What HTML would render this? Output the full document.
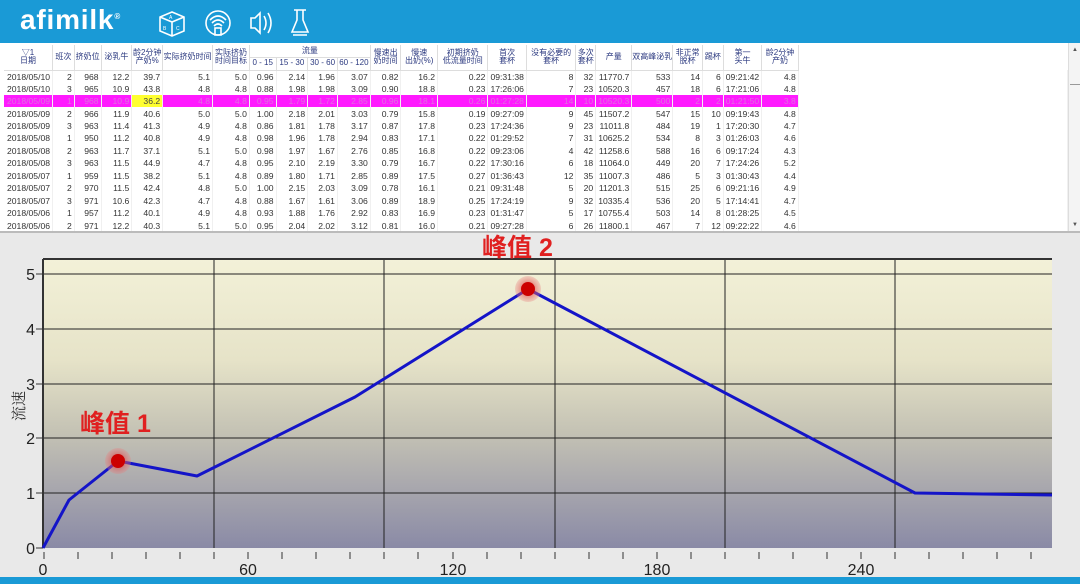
<!DOCTYPE html>
<html><head><meta charset="utf-8">
<style>
*{margin:0;padding:0;box-sizing:border-box}
body{width:1080px;height:584px;overflow:hidden;background:#fff;font-family:"Liberation Sans","Noto Sans CJK SC",sans-serif;position:relative}
#hdr{position:absolute;left:0;top:0;width:1080px;height:43px;background:#1a9ad6}
#logo{position:absolute;left:20px;top:4px;color:#fff;font-weight:bold;font-size:28px;letter-spacing:0.8px}
#logo sup{font-size:8px;vertical-align:top;position:relative;top:8px}
#tbl{position:absolute;left:4px;top:45px;width:1064px;height:186px;overflow:hidden}
table{border-collapse:collapse;table-layout:fixed;font-size:8.6px;color:#333}
td{height:12.45px;line-height:12px;text-align:right;padding:0 2px;white-space:nowrap;overflow:hidden;border-right:1px solid #f0f0f0}
td:first-child{text-align:left;padding-left:3px}
th{font-weight:normal;color:#2c3a80;font-size:8px;line-height:8.5px;border-right:1px solid #ddd;border-bottom:1px solid #ddd;background:#fff;white-space:nowrap;overflow:hidden}
tr.h td{background:#ff1aff;color:#e070e0}
td.y{background:#ffff30 !important;color:#444 !important}
#sb{position:absolute;left:1068px;top:43px;width:12px;height:188px;background:#f4f4f4;border-left:1px solid #ddd}
#panel{position:absolute;left:0;top:231px;width:1080px;height:346px;background:#e9e9e9;border-top:2px solid #bbb}
#foot{position:absolute;left:0;top:577px;width:1080px;height:7px;background:#1a9ad6}
</style></head><body>
<div id="hdr">
<div id="logo">afimilk<sup>®</sup></div>
<svg width="1080" height="43" style="position:absolute;left:0;top:0" fill="none" stroke="#fff" stroke-width="1.6">
<path d="M172 12 L184 17 L184 31 L172 36 L160 31 L160 17 Z M160 17 L172 22 L184 17 M172 22 L172 36"/>
<text x="169" y="19" font-size="5" fill="#fff" stroke="none">A</text>
<text x="163" y="30" font-size="5" fill="#fff" stroke="none">B</text>
<text x="176" y="30" font-size="5" fill="#fff" stroke="none">C</text>
<circle cx="218" cy="23" r="12"/>
<path d="M210 20 Q218 12 226 20 M212 23 Q218 17 224 23 M214 26 Q218 22 222 26"/>
<rect x="215" y="28" width="6" height="7"/>
<path d="M251 18 h4 l5 -5 v20 l-5 -5 h-4 Z M264 16 q4 7 0 14 M268 13 q6 10 0 20"/>
<path d="M294 10 h12 M297 10 v10 l-5 12 h16 l-5 -12 v-10 M293 35 h14"/>
</svg>
</div>
<div id="tbl">
<table>
<colgroup><col style="width:44px"><col style="width:22px"><col style="width:27px"><col style="width:31px"><col style="width:31px"><col style="width:50px"><col style="width:37px"><col style="width:27px"><col style="width:32px"><col style="width:30px"><col style="width:33px"><col style="width:31px"><col style="width:37px"><col style="width:51px"><col style="width:34px"><col style="width:50px"><col style="width:20px"><col style="width:31px"><col style="width:40px"><col style="width:30px"><col style="width:21px"><col style="width:33px"><col style="width:37px"><col style="width:285px"></colgroup>
<tr style="height:12px"><th rowspan="2">▽1<br>日期</th><th rowspan="2">班次</th><th rowspan="2">挤奶位</th><th rowspan="2">泌乳牛</th><th rowspan="2">龄2分钟<br>产奶%</th><th rowspan="2">实际挤奶时间</th><th rowspan="2">实际挤奶<br>时间目标</th><th colspan="4">流量</th><th rowspan="2">慢速出<br>奶时间</th><th rowspan="2">慢速<br>出奶(%)</th><th rowspan="2">初期挤奶<br>低流量时间</th><th rowspan="2">首次<br>套杯</th><th rowspan="2">没有必要的<br>套杯</th><th rowspan="2">多次<br>套杯</th><th rowspan="2">产量</th><th rowspan="2">双高峰泌乳</th><th rowspan="2">非正常<br>脱杯</th><th rowspan="2">踢杯</th><th rowspan="2">第一<br>头牛</th><th rowspan="2">龄2分钟<br>产奶</th><th rowspan="2" style="border:none"></th></tr>
<tr style="height:13px"><th>0 - 15</th><th>15 - 30</th><th>30 - 60</th><th>60 - 120</th></tr>
<tr><td>2018/05/10</td><td>2</td><td>968</td><td>12.2</td><td>39.7</td><td>5.1</td><td>5.0</td><td>0.96</td><td>2.14</td><td>1.96</td><td>3.07</td><td>0.82</td><td>16.2</td><td>0.22</td><td>09:31:38</td><td>8</td><td>32</td><td>11770.7</td><td>533</td><td>14</td><td>6</td><td>09:21:42</td><td>4.8</td><td></td></tr>
<tr><td>2018/05/10</td><td>3</td><td>965</td><td>10.9</td><td>43.8</td><td>4.8</td><td>4.8</td><td>0.88</td><td>1.98</td><td>1.98</td><td>3.09</td><td>0.90</td><td>18.8</td><td>0.23</td><td>17:26:06</td><td>7</td><td>23</td><td>10520.3</td><td>457</td><td>18</td><td>6</td><td>17:21:06</td><td>4.8</td><td></td></tr>
<tr class="h"><td>2018/05/09</td><td>1</td><td>968</td><td>10.9</td><td class="y">36.2</td><td>4.8</td><td>4.8</td><td>0.95</td><td>1.79</td><td>1.72</td><td>2.85</td><td>0.96</td><td>18.1</td><td>0.26</td><td>01:27:28</td><td>14</td><td>10</td><td>10520.3</td><td>500</td><td>2</td><td>2</td><td>01:21:50</td><td>3.8</td><td style="background:#fff"></td></tr>
<tr><td>2018/05/09</td><td>2</td><td>966</td><td>11.9</td><td>40.6</td><td>5.0</td><td>5.0</td><td>1.00</td><td>2.18</td><td>2.01</td><td>3.03</td><td>0.79</td><td>15.8</td><td>0.19</td><td>09:27:09</td><td>9</td><td>45</td><td>11507.2</td><td>547</td><td>15</td><td>10</td><td>09:19:43</td><td>4.8</td><td></td></tr>
<tr><td>2018/05/09</td><td>3</td><td>963</td><td>11.4</td><td>41.3</td><td>4.9</td><td>4.8</td><td>0.86</td><td>1.81</td><td>1.78</td><td>3.17</td><td>0.87</td><td>17.8</td><td>0.23</td><td>17:24:36</td><td>9</td><td>23</td><td>11011.8</td><td>484</td><td>19</td><td>1</td><td>17:20:30</td><td>4.7</td><td></td></tr>
<tr><td>2018/05/08</td><td>1</td><td>950</td><td>11.2</td><td>40.8</td><td>4.9</td><td>4.8</td><td>0.98</td><td>1.96</td><td>1.78</td><td>2.94</td><td>0.83</td><td>17.1</td><td>0.22</td><td>01:29:52</td><td>7</td><td>31</td><td>10625.2</td><td>534</td><td>8</td><td>3</td><td>01:26:03</td><td>4.6</td><td></td></tr>
<tr><td>2018/05/08</td><td>2</td><td>963</td><td>11.7</td><td>37.1</td><td>5.1</td><td>5.0</td><td>0.98</td><td>1.97</td><td>1.67</td><td>2.76</td><td>0.85</td><td>16.8</td><td>0.22</td><td>09:23:06</td><td>4</td><td>42</td><td>11258.6</td><td>588</td><td>16</td><td>6</td><td>09:17:24</td><td>4.3</td><td></td></tr>
<tr><td>2018/05/08</td><td>3</td><td>963</td><td>11.5</td><td>44.9</td><td>4.7</td><td>4.8</td><td>0.95</td><td>2.10</td><td>2.19</td><td>3.30</td><td>0.79</td><td>16.7</td><td>0.22</td><td>17:30:16</td><td>6</td><td>18</td><td>11064.0</td><td>449</td><td>20</td><td>7</td><td>17:24:26</td><td>5.2</td><td></td></tr>
<tr><td>2018/05/07</td><td>1</td><td>959</td><td>11.5</td><td>38.2</td><td>5.1</td><td>4.8</td><td>0.89</td><td>1.80</td><td>1.71</td><td>2.85</td><td>0.89</td><td>17.5</td><td>0.27</td><td>01:36:43</td><td>12</td><td>35</td><td>11007.3</td><td>486</td><td>5</td><td>3</td><td>01:30:43</td><td>4.4</td><td></td></tr>
<tr><td>2018/05/07</td><td>2</td><td>970</td><td>11.5</td><td>42.4</td><td>4.8</td><td>5.0</td><td>1.00</td><td>2.15</td><td>2.03</td><td>3.09</td><td>0.78</td><td>16.1</td><td>0.21</td><td>09:31:48</td><td>5</td><td>20</td><td>11201.3</td><td>515</td><td>25</td><td>6</td><td>09:21:16</td><td>4.9</td><td></td></tr>
<tr><td>2018/05/07</td><td>3</td><td>971</td><td>10.6</td><td>42.3</td><td>4.7</td><td>4.8</td><td>0.88</td><td>1.67</td><td>1.61</td><td>3.06</td><td>0.89</td><td>18.9</td><td>0.25</td><td>17:24:19</td><td>9</td><td>32</td><td>10335.4</td><td>536</td><td>20</td><td>5</td><td>17:14:41</td><td>4.7</td><td></td></tr>
<tr><td>2018/05/06</td><td>1</td><td>957</td><td>11.2</td><td>40.1</td><td>4.9</td><td>4.8</td><td>0.93</td><td>1.88</td><td>1.76</td><td>2.92</td><td>0.83</td><td>16.9</td><td>0.23</td><td>01:31:47</td><td>5</td><td>17</td><td>10755.4</td><td>503</td><td>14</td><td>8</td><td>01:28:25</td><td>4.5</td><td></td></tr>
<tr><td>2018/05/06</td><td>2</td><td>971</td><td>12.2</td><td>40.3</td><td>5.1</td><td>5.0</td><td>0.95</td><td>2.04</td><td>2.02</td><td>3.12</td><td>0.81</td><td>16.0</td><td>0.21</td><td>09:27:28</td><td>6</td><td>26</td><td>11800.1</td><td>467</td><td>7</td><td>12</td><td>09:22:22</td><td>4.6</td><td></td></tr>
</table>
</div>
<div id="sb"><div style="position:absolute;left:3px;top:4px;font-size:6px;color:#555">▲</div><div style="position:absolute;left:3px;bottom:3px;font-size:6px;color:#555">▼</div><div style="position:absolute;left:1px;top:41px;width:10px;height:1px;background:#999"></div></div>
<div id="panel"></div>
<svg width="1080" height="584" style="position:absolute;left:0;top:0">
<defs><linearGradient id="g" x1="0" y1="0" x2="0" y2="1">
<stop offset="0" stop-color="#f3f1d8"/><stop offset="0.35" stop-color="#e6e3c8"/><stop offset="0.6" stop-color="#c4c2b4"/><stop offset="1" stop-color="#8a8aa6"/></linearGradient>
<radialGradient id="r"><stop offset="0.5" stop-color="#e05050" stop-opacity="0.6"/><stop offset="1" stop-color="#e88080" stop-opacity="0.3"/></radialGradient></defs>
<rect x="43" y="259" width="1009" height="289" fill="url(#g)"/>
<g stroke="#222" stroke-width="1">
<line x1="43" y1="274" x2="1052" y2="274"/><line x1="43" y1="329" x2="1052" y2="329"/><line x1="43" y1="384" x2="1052" y2="384"/><line x1="43" y1="438" x2="1052" y2="438"/><line x1="43" y1="493" x2="1052" y2="493"/>
<line x1="214" y1="259" x2="214" y2="548"/><line x1="384" y1="259" x2="384" y2="548"/><line x1="555" y1="259" x2="555" y2="548"/><line x1="725" y1="259" x2="725" y2="548"/><line x1="895" y1="259" x2="895" y2="548"/>
</g>
<line x1="43" y1="259" x2="1052" y2="259" stroke="#333" stroke-width="2"/>
<line x1="43" y1="259" x2="43" y2="548" stroke="#333" stroke-width="2"/>
<g stroke="#333" stroke-width="1">
<line x1="36" y1="274" x2="43" y2="274"/><line x1="36" y1="329" x2="43" y2="329"/><line x1="36" y1="384" x2="43" y2="384"/><line x1="36" y1="438" x2="43" y2="438"/><line x1="36" y1="493" x2="43" y2="493"/><line x1="36" y1="548" x2="43" y2="548"/>
<path d="M44 552v7M78 552v7M112 552v7M146 552v7M180 552v7M214 552v7M248 552v7M282 552v7M316 552v7M350 552v7M384 552v7M418 552v7M453 552v7M487 552v7M521 552v7M555 552v7M589 552v7M623 552v7M657 552v7M691 552v7M725 552v7M759 552v7M793 552v7M827 552v7M861 552v7M895 552v7M929 552v7M963 552v7M997 552v7M1031 552v7"/>
</g>
<g font-family="Liberation Sans,sans-serif" font-size="16" fill="#222" text-anchor="end">
<text x="35" y="280">5</text><text x="35" y="335">4</text><text x="35" y="390">3</text><text x="35" y="444">2</text><text x="35" y="499">1</text><text x="35" y="554">0</text></g>
<g font-family="Liberation Sans,sans-serif" font-size="16" fill="#222" text-anchor="middle">
<text x="43" y="575">0</text><text x="248" y="575">60</text><text x="453" y="575">120</text><text x="657" y="575">180</text><text x="861" y="575">240</text></g>
<text transform="translate(24,406) rotate(-90)" font-family="Noto Serif CJK SC,serif" font-size="15" fill="#333" text-anchor="middle">流速</text>
<polyline points="43,548 69,500 118,461 197,476 355,397 528,289 915,493 1052,495" fill="none" stroke="#1414c8" stroke-width="3" stroke-linejoin="round"/>
<circle cx="118" cy="461" r="13" fill="url(#r)"/><circle cx="118" cy="461" r="7" fill="#cc0000"/>
<circle cx="528" cy="289" r="13" fill="url(#r)"/><circle cx="528" cy="289" r="7" fill="#cc0000"/>
<g font-family="Liberation Sans,Noto Sans CJK SC,sans-serif" font-weight="bold" font-size="25" fill="#e02020">
<text x="80" y="432">峰值 1</text><text x="482" y="256">峰值 2</text></g>
</svg>
<div id="foot"></div>
</body></html>
